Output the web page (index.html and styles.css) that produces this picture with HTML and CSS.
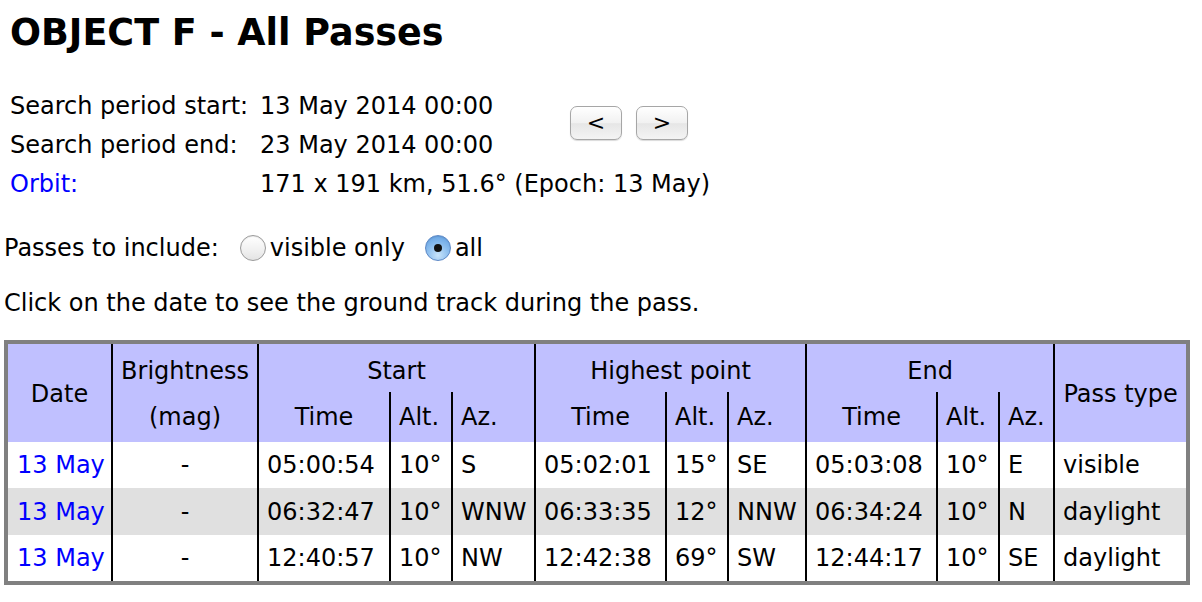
FILE: index.html
```html
<!DOCTYPE html>
<html>
<head>
<meta charset="utf-8">
<link rel="stylesheet" href="styles.css">
</head>
<body>
<div class="page">
  <h1 class="title">OBJECT F - All Passes</h1>
  <div class="info">
    <div class="lbl r1">Search period start:</div>
    <div class="val r1">13 May 2014 00:00</div>
    <div class="navs">
      <button class="nav">&lt;</button>
      <button class="nav">&gt;</button>
    </div>
    <div class="lbl r2">Search period end:</div>
    <div class="val r2">23 May 2014 00:00</div>
    <div class="lbl r3"><a href="#" class="link">Orbit:</a></div>
    <div class="val r3 wide">171 x 191 km, 51.6° (Epoch: 13 May)</div>
  </div>
  <div class="passes">
    <span class="plabel">Passes to include:</span>
    <label class="opt"><span class="radio"></span>visible only</label>
    <label class="opt"><span class="radio on"><span class="dot"></span></span>all</label>
  </div>
  <p class="hint">Click on the date to see the ground track during the pass.</p>
  <table class="passtable">
    <colgroup>
      <col style="width:103px"><col style="width:146px">
      <col style="width:132px"><col style="width:62px"><col style="width:83px">
      <col style="width:131px"><col style="width:62px"><col style="width:78px">
      <col style="width:131px"><col style="width:62px"><col style="width:55px">
      <col style="width:133px">
    </colgroup>
    <thead>
      <tr class="h1row">
        <th rowspan="2" class="first span2">Date</th>
        <th>Brightness</th>
        <th colspan="3">Start</th>
        <th colspan="3">Highest point</th>
        <th colspan="3">End</th>
        <th rowspan="2" class="span2">Pass type</th>
      </tr>
      <tr class="h2row">
        <th>(mag)</th>
        <th>Time</th><th class="l">Alt.</th><th class="l">Az.</th>
        <th>Time</th><th class="l">Alt.</th><th class="l">Az.</th>
        <th>Time</th><th class="l">Alt.</th><th class="l">Az.</th>
      </tr>
    </thead>
    <tbody>
      <tr class="r-white">
        <td class="first"><a href="#" class="link">13 May</a></td><td class="c">-</td>
        <td>05:00:54</td><td>10°</td><td>S</td>
        <td>05:02:01</td><td>15°</td><td>SE</td>
        <td>05:03:08</td><td>10°</td><td>E</td>
        <td>visible</td>
      </tr>
      <tr class="r-grey">
        <td class="first"><a href="#" class="link">13 May</a></td><td class="c">-</td>
        <td>06:32:47</td><td>10°</td><td>WNW</td>
        <td>06:33:35</td><td>12°</td><td>NNW</td>
        <td>06:34:24</td><td>10°</td><td>N</td>
        <td>daylight</td>
      </tr>
      <tr class="r-white">
        <td class="first"><a href="#" class="link">13 May</a></td><td class="c">-</td>
        <td>12:40:57</td><td>10°</td><td>NW</td>
        <td>12:42:38</td><td>69°</td><td>SW</td>
        <td>12:44:17</td><td>10°</td><td>SE</td>
        <td>daylight</td>
      </tr>
    </tbody>
  </table>
</div>
</body>
</html>
```
FILE: styles.css
```css
html, body {
  margin: 0;
  padding: 0;
  background: #fff;
}
body {
  font-family: "DejaVu Sans", Verdana, sans-serif;
  font-size: 24px;
  color: #000;
}
.page {
  padding: 0 4px;
}
.title {
  font-size: 36.5px;
  font-weight: bold;
  margin: 0;
  padding: 11px 0 0 6px;
  line-height: 44px;
}
.info {
  display: grid;
  grid-template-columns: 250px 310px auto;
  grid-auto-rows: 39px;
  margin-top: 31px;
  padding-left: 6px;
  align-items: center;
}
.lbl { grid-column: 1; }
.val { grid-column: 2; }
.r1 { grid-row: 1; }
.r2 { grid-row: 2; }
.r3 { grid-row: 3; }
.wide { grid-column: 2 / 4; }
.navs {
  grid-column: 3;
  grid-row: 1 / 3;
  display: flex;
  gap: 14px;
  align-items: center;
  padding-bottom: 5px;
}
.nav {
  width: 52px;
  height: 34px;
  border: 1px solid #a6a6a6;
  border-radius: 7px;
  background: linear-gradient(#ffffff, #f1f1f1 50%, #e6e6e6 52%, #f4f4f4);
  font-family: "DejaVu Sans", sans-serif;
  font-size: 22px;
  color: #000;
  padding: 0;
  line-height: 30px;
  box-shadow: 0 1px 1px rgba(0,0,0,0.15);
}
.link {
  color: #0000ff;
  text-decoration: none;
}
.passes {
  display: flex;
  align-items: center;
  margin-top: 25px;
  height: 40px;
}
.plabel {
  margin-right: 21px;
}
.opt {
  display: flex;
  align-items: center;
  margin-right: 20px;
}
.radio {
  width: 24px;
  height: 24px;
  border: 1px solid #9a9a9a;
  border-radius: 50%;
  background: linear-gradient(#ffffff, #f0f0f0 60%, #e4e4e4);
  margin-right: 4px;
  display: flex;
  align-items: center;
  justify-content: center;
  box-shadow: inset 0 1px 1px rgba(0,0,0,0.08);
}
.radio.on {
  border-color: #5c88c6;
  background: radial-gradient(circle at 50% 80%, #c8e4fb 0%, #8fc0ef 45%, #5a9be0 100%);
}
.dot {
  width: 8px;
  height: 8px;
  border-radius: 50%;
  background: #111;
}
.hint {
  margin: 19px 0 0 0;
  line-height: 32px;
}
.passtable {
  margin-top: 21px;
  border: 4px solid #808080;
  border-spacing: 0;
  border-collapse: separate;
  table-layout: fixed;
  width: 1186px;
}
.passtable th, .passtable td {
  border-left: 2px solid #000;
  padding: 0 0 0 8px;
  white-space: nowrap;
  overflow: hidden;
}
.passtable th.first, .passtable td.first {
  border-left: none;
}
.passtable th {
  background: #c0c0ff;
  font-weight: normal;
  text-align: center;
  padding: 0;
}
.passtable th.l {
  text-align: left;
  padding-left: 8px;
}
.h1row th { height: 43px; padding-top: 5px; }
.h1row th.span2 { padding-top: 2px; }
.h2row th { height: 50px; }
.passtable td {
  height: 46.4px;
  text-align: left;
}
.passtable td.first { padding-left: 9px; }
.passtable td.c {
  text-align: center;
  padding: 0;
}
.r-grey td { background: #e0e0e0; }
.r-white td { background: #fff; }
```
